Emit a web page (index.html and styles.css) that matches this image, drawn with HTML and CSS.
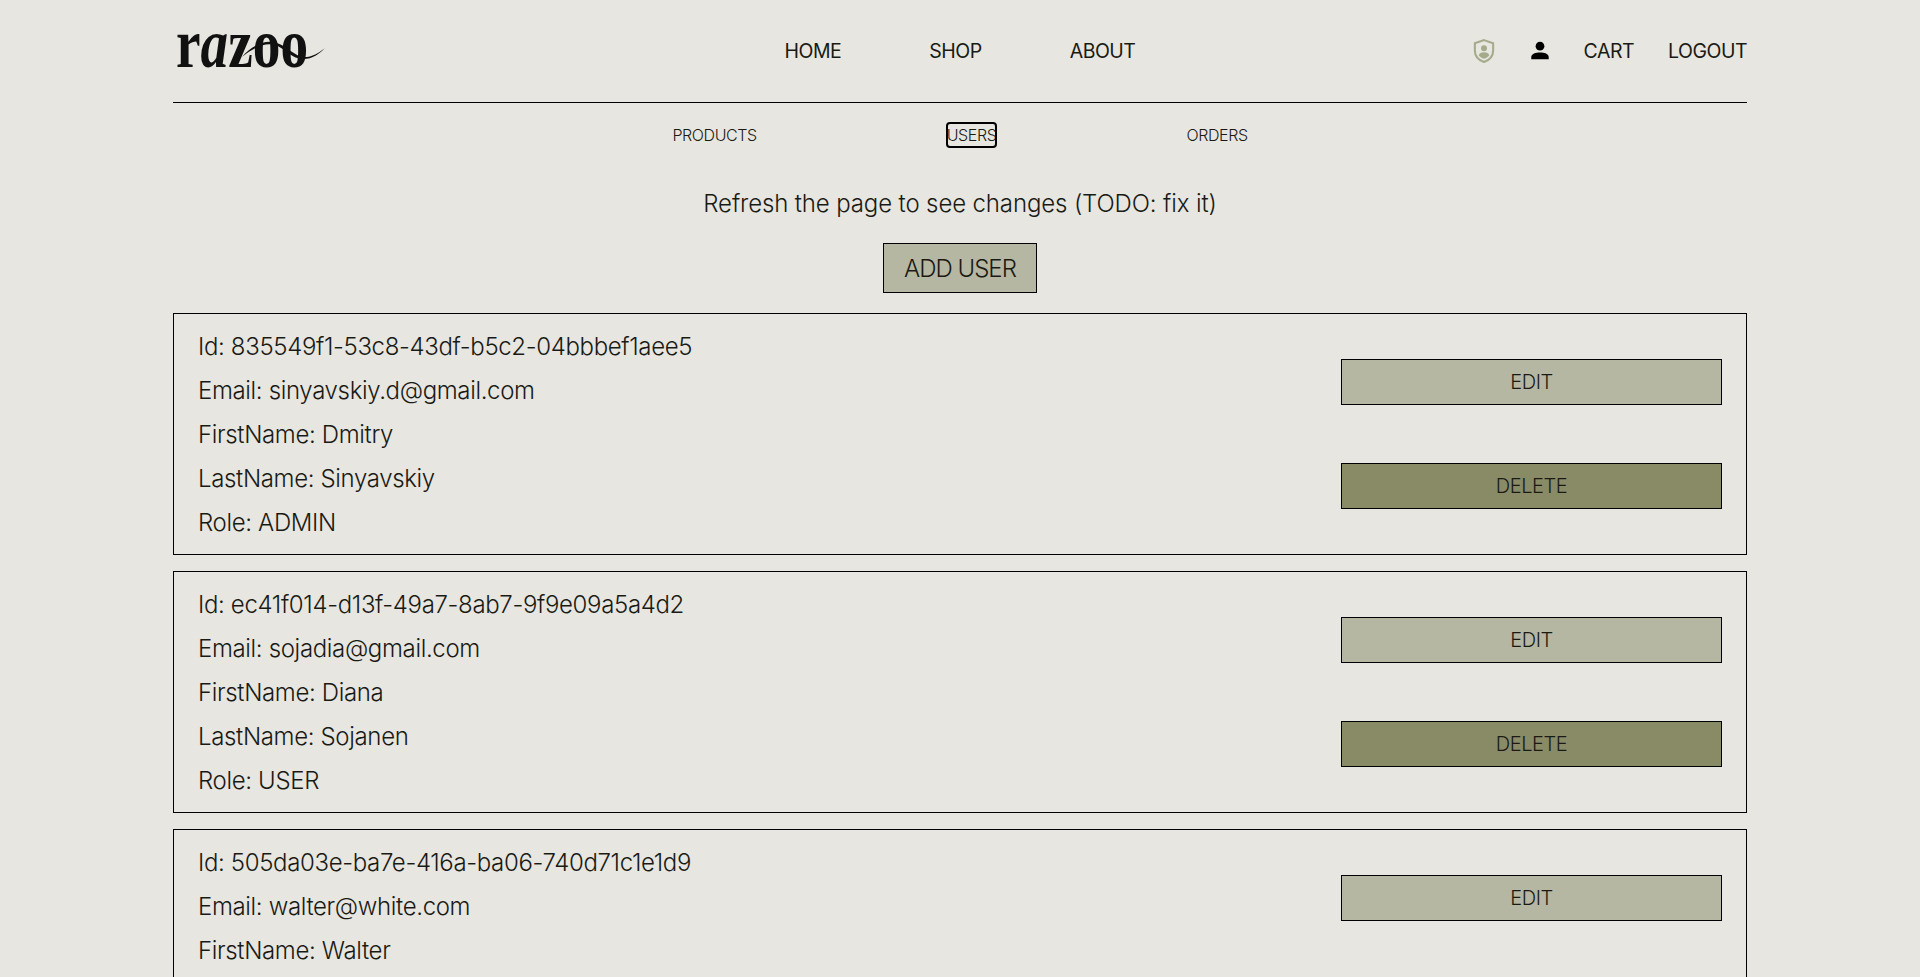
FILE: index.html
```html
<!DOCTYPE html>
<html lang="en">
<head>
<meta charset="utf-8">
<title>Razoo</title>
<link rel="stylesheet" href="styles.css">
</head>
<body>
<div class="page">
  <header class="header">
    <a class="logo" href="#">
      <span class="logo-text">r<i>a</i>zoo</span>
      <svg class="logo-swoosh" viewBox="0 0 155 44" width="155" height="44" aria-hidden="true">
        <path d="M69 29C78 18 92 11 104 15C116 19 122 30 134 29C142 28 148 23 152 20C146 26 140 31 130 31C118 31 112 20 102 17C92 14 80 20 69 29Z"/>
      </svg>
    </a>
    <nav class="main-nav">
      <a href="#">HOME</a>
      <a href="#">SHOP</a>
      <a href="#">ABOUT</a>
    </nav>
    <div class="actions">
      <svg class="icon-shield" viewBox="3 1.5 18 21" width="24" height="24">
        <path class="shield-outline" d="M12 2.5L20 5.2V11.5C20 16.4 16.6 20 12 21.6C7.4 20 4 16.4 4 11.5V5.2Z"/>
        <circle class="shield-fill" cx="12" cy="9.6" r="2.6"/>
        <path class="shield-fill" d="M7.4 16C7.8 14 9.6 13.2 12 13.2C14.4 13.2 16.2 14 16.6 16C15.4 17.4 13.8 18.3 12 18.8C10.2 18.3 8.6 17.4 7.4 16Z"/>
      </svg>
      <svg class="icon-user" viewBox="1 1 22 22" width="24" height="24">
        <circle cx="12" cy="7.6" r="4"/>
        <path d="M4 19.5V17.6C4 14.6 8 13.4 12 13.4C16 13.4 20 14.6 20 17.6V19.5Z"/>
      </svg>
      <a href="#">CART</a>
      <a href="#">LOGOUT</a>
    </div>
  </header>

  <nav class="sub-nav">
    <a href="#">PRODUCTS</a>
    <a class="focused" href="#">USERS</a>
    <a href="#">ORDERS</a>
  </nav>

  <p class="notice">Refresh the page to see changes (TODO: fix it)</p>
  <div class="add-row"><button class="btn-add">ADD USER</button></div>

  <section class="users">
    <article class="card">
      <div class="info">
        <p>Id: 835549f1-53c8-43df-b5c2-04bbbef1aee5</p>
        <p>Email: sinyavskiy.d@gmail.com</p>
        <p>FirstName: Dmitry</p>
        <p>LastName: Sinyavskiy</p>
        <p>Role: ADMIN</p>
      </div>
      <div class="card-actions">
        <button class="btn btn-edit">EDIT</button>
        <button class="btn btn-delete">DELETE</button>
      </div>
    </article>
    <article class="card">
      <div class="info">
        <p>Id: ec41f014-d13f-49a7-8ab7-9f9e09a5a4d2</p>
        <p>Email: sojadia@gmail.com</p>
        <p>FirstName: Diana</p>
        <p>LastName: Sojanen</p>
        <p>Role: USER</p>
      </div>
      <div class="card-actions">
        <button class="btn btn-edit">EDIT</button>
        <button class="btn btn-delete">DELETE</button>
      </div>
    </article>
    <article class="card">
      <div class="info">
        <p>Id: 505da03e-ba7e-416a-ba06-740d71c1e1d9</p>
        <p>Email: walter@white.com</p>
        <p>FirstName: Walter</p>
      </div>
      <div class="card-actions">
        <button class="btn btn-edit">EDIT</button>
      </div>
    </article>
  </section>
</div>
</body>
</html>
```
FILE: styles.css
```css
* { box-sizing: border-box; }
html, body { margin: 0; height: 100%; overflow: hidden; }
body {
  background: #e7e6e1;
  color: #1a1a14;
  font-family: Inter, "Open Sans", sans-serif;
  font-weight: 300;
}
a { color: inherit; text-decoration: none; }
p { margin: 0; }
button { font-family: inherit; color: inherit; cursor: pointer; font-weight: 300; }

.page { width: 1574px; margin: 0 auto; }

.header {
  height: 103px;
  border-bottom: 1px solid #000;
  display: grid;
  grid-template-columns: 1fr auto 1fr;
  align-items: center;
}
.logo {
  display: block;
  position: relative;
  width: 155px;
  height: 44px;
  align-self: start;
  margin-top: 28px;
}
.logo-text {
  display: block;
  width: 170px;
  margin-top: -6px;
  margin-left: 3px;
  font-family: "Liberation Serif", serif;
  font-size: 70px;
  line-height: 44px;
  font-weight: 700;
  color: #111;
  transform: scaleX(.79);
  transform-origin: left center;
  white-space: nowrap;
}
.logo-swoosh { position: absolute; left: 0; top: 0; fill: #111; }
.main-nav { display: flex; gap: 88px; font-size: 19.5px; font-weight: 400; letter-spacing: -.5px; }
.actions { display: flex; justify-content: flex-end; align-items: center; font-size: 19.5px; font-weight: 400; letter-spacing: -.5px; }
.icon-shield { margin-right: 32px; }
.icon-user { margin-right: 32px; fill: #000; }
.actions a + a { margin-left: 34px; }
.shield-outline { fill: none; stroke: #a5ab8a; stroke-width: 1.8; }
.shield-fill { fill: #a5ab8a; }

.sub-nav {
  display: flex;
  justify-content: center;
  align-items: center;
  gap: 190px;
  height: 53px;
  margin-top: 5px;
  font-size: 16px;
  line-height: 24px;
  font-weight: 300;
  letter-spacing: -.4px;
}
.focused { outline: 2px solid #000; outline-offset: -1px; border-radius: 3px; }

.notice { text-align: center; font-size: 24px; line-height: 32px; margin-top: 27px; letter-spacing: -.13px; }
.add-row { display: flex; justify-content: center; margin-top: 23px; }
.btn-add {
  width: 154px;
  height: 50px;
  background: #b6b7a2;
  border: 1px solid #000;
  font-size: 24px;
  letter-spacing: -1px;
  padding: 0;
}

.users { margin-top: 20px; display: flex; flex-direction: column; gap: 16px; }
.card {
  height: 242px;
  border: 1px solid #000;
  padding: 11px 24px 0;
  display: flex;
  justify-content: space-between;
  align-items: flex-start;
}
.info { font-size: 24px; line-height: 44px; letter-spacing: -.35px; }
.card-actions {
  width: 381px;
  display: flex;
  flex-direction: column;
  gap: 58px;
  margin-top: 34px;
}
.btn { height: 46px; border: 1px solid #000; font-size: 20px; letter-spacing: -.4px; padding: 0; }
.btn-edit { background: #b6b7a2; }
.btn-delete { background: #898b67; }
```
